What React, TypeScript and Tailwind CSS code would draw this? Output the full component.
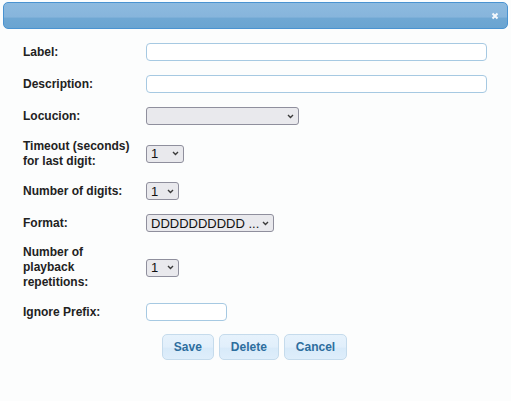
import React from "react";

function Chevron() {
  return (
    <svg width="7" height="5" viewBox="0 0 7 5" className="shrink-0">
      <path d="M1 1 L3.5 3.5 L6 1" fill="none" stroke="#3b3b3b" strokeWidth="1.4" />
    </svg>
  );
}

function FakeSelect({ value, width }: { value?: string; width: string }) {
  return (
    <div
      className={`${width} h-[18px] flex items-center justify-between pl-[4px] pr-[4px] border border-[#8f8f9d] rounded-[3px] bg-[#e9e9ed] text-[13px] leading-none text-[#111]`}
    >
      <span className="whitespace-nowrap">{value ?? ""}</span>
      <Chevron />
    </div>
  );
}

function TextBox({ width }: { width: string }) {
  return (
    <input
      type="text"
      className={`${width} h-[18px] border border-[#a6c9e2] rounded-[4px] bg-white outline-none`}
    />
  );
}

function Row({
  label,
  height,
  children,
}: {
  label: React.ReactNode;
  height: string;
  children: React.ReactNode;
}) {
  return (
    <div className={`flex items-center ${height}`}>
      <div className="w-[123px] pr-[14px] text-[12px] leading-[15px] font-bold text-[#222]">
        {label}
      </div>
      <div className="flex-1 flex items-center">{children}</div>
    </div>
  );
}

export default function App() {
  const buttons = ["Save", "Delete", "Cancel"];

  return (
    <div
      className="w-[511px] h-[401px] bg-[#fcfdfd] pt-[2px] px-[3px]"
      style={{ fontFamily: '"Liberation Sans", Arial, sans-serif' }}
    >
      {/* title bar */}
      <div className="h-[27px] rounded-[5px] border border-[#4a93d1] bg-[linear-gradient(to_bottom,#8dbadf_0%,#87b5dc_55%,#6fa7d3_62%,#6aa4d1_100%)] flex items-center justify-end pr-[8px]">
        <svg width="8" height="8" viewBox="0 0 8 8">
          <path d="M1.5 1.5 L6.5 6.5 M6.5 1.5 L1.5 6.5" stroke="#f4f8fc" strokeWidth="2" />
        </svg>
      </div>

      <div className="pt-[7px] pl-[20px] pr-[21px]">
        <Row label="Label:" height="h-8">
          <TextBox width="w-full" />
        </Row>
        <Row label="Description:" height="h-8">
          <TextBox width="w-full" />
        </Row>
        <Row label="Locucion:" height="h-8">
          <FakeSelect width="w-[153px]" />
        </Row>
        <Row
          label={
            <>
              Timeout (seconds)
              <br />
              for last digit:
            </>
          }
          height="h-[43px]"
        >
          <FakeSelect value="1" width="w-[38px]" />
        </Row>
        <Row label="Number of digits:" height="h-8">
          <FakeSelect value="1" width="w-[33px]" />
        </Row>
        <Row label="Format:" height="h-8">
          <FakeSelect value="DDDDDDDDDD ..." width="w-[128px]" />
        </Row>
        <Row
          label={
            <>
              Number of
              <br />
              playback
              <br />
              repetitions:
            </>
          }
          height="h-[57px]"
        >
          <FakeSelect value="1" width="w-[33px]" />
        </Row>
        <Row label="Ignore Prefix:" height="h-8">
          <TextBox width="w-[81px]" />
        </Row>
      </div>

      <div className="mt-[6px] flex justify-center gap-[5px] pr-[2px]">
        {buttons.map((b) => (
          <button
            key={b}
            type="button"
            className="h-[26px] px-[11px] rounded-[5px] border border-[#c5dbec] bg-[linear-gradient(to_bottom,#e6f2fc_0%,#e1effb_50%,#d8eaf9_55%,#deeefb_100%)] text-[12px] font-bold text-[#2e6e9e]"
          >
            {b}
          </button>
        ))}
      </div>
    </div>
  );
}
